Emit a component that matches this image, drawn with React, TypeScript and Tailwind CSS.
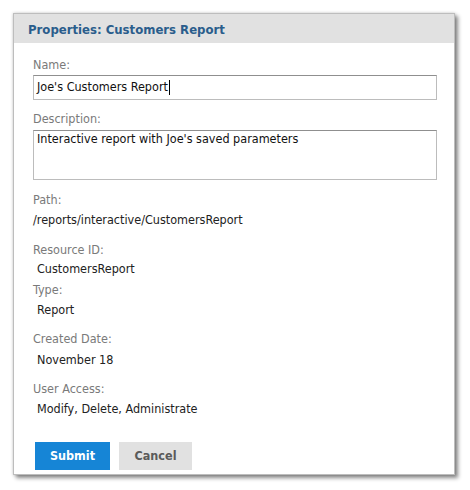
import React from "react";

function Label({ children, mt }: { children: React.ReactNode; mt: string }) {
  return <div className={`${mt} text-[12.5px] leading-[16px] text-[#7a7a7a]`}>{children}</div>;
}

export default function App() {
  return (
    <div className="w-[470px] h-[490px] bg-white pt-[13px] pl-[13px] font-['DejaVu_Sans_Condensed','DejaVu_Sans',sans-serif]">
      <div className="w-[442px] h-[462px] bg-white border border-[#bdbdbd] shadow-[3px_3px_4px_rgba(0,0,0,0.45),0_0_3px_rgba(0,0,0,0.2)] flex flex-col">
        <div className="h-[29px] bg-[#e1e1e1] pl-[14px] pt-[1px] text-[13px] leading-[29px] font-bold text-[#2a5d8c]">
          Properties: Customers Report
        </div>
        <div className="pl-[19px] pr-[17px] flex flex-col">
          <Label mt="mt-[14px]">Name:</Label>
          <div className="mt-[2px] h-[25px] border border-[#bcbcbc] border-t-[#8f8f8f] flex items-center pl-[3px] text-[12.5px] text-[#111111]">
            <span>Joe's Customers Report</span>
            <span className="inline-block w-[1px] h-[15px] bg-black ml-[1px]" />
          </div>
          <Label mt="mt-[11px]">Description:</Label>
          <div className="mt-[3px] h-[50px] border border-[#bcbcbc] border-t-[#8f8f8f] pl-[3px] text-[12.5px] leading-[16px] text-[#111111]">
            Interactive report with Joe's saved parameters
          </div>
          <Label mt="mt-[12px]">Path:</Label>
          <div className="mt-[4px] text-[12.5px] leading-[16px] text-[#222222]">/reports/interactive/CustomersReport</div>
          <Label mt="mt-[14px]">Resource ID:</Label>
          <div className="mt-[3px] pl-[4px] text-[12.5px] leading-[16px] text-[#222222]">CustomersReport</div>
          <Label mt="mt-[5px]">Type:</Label>
          <div className="mt-[4px] pl-[4px] text-[12.5px] leading-[16px] text-[#222222]">Report</div>
          <Label mt="mt-[13px]">Created Date:</Label>
          <div className="mt-[5px] pl-[4px] text-[12.5px] leading-[16px] text-[#222222]">November 18</div>
          <Label mt="mt-[13px]">User Access:</Label>
          <div className="mt-[4px] pl-[4px] text-[12.5px] leading-[16px] text-[#222222]">Modify, Delete, Administrate</div>
          <div className="mt-[25px] pl-[2px] flex gap-[9px]">
            <button className="w-[75px] h-[28px] bg-[#1685d6] text-white text-[12.5px] font-bold">Submit</button>
            <button className="w-[73px] h-[28px] bg-[#e1e1e1] text-[#5a5a5a] text-[12.5px] font-bold">Cancel</button>
          </div>
        </div>
      </div>
    </div>
  );
}
